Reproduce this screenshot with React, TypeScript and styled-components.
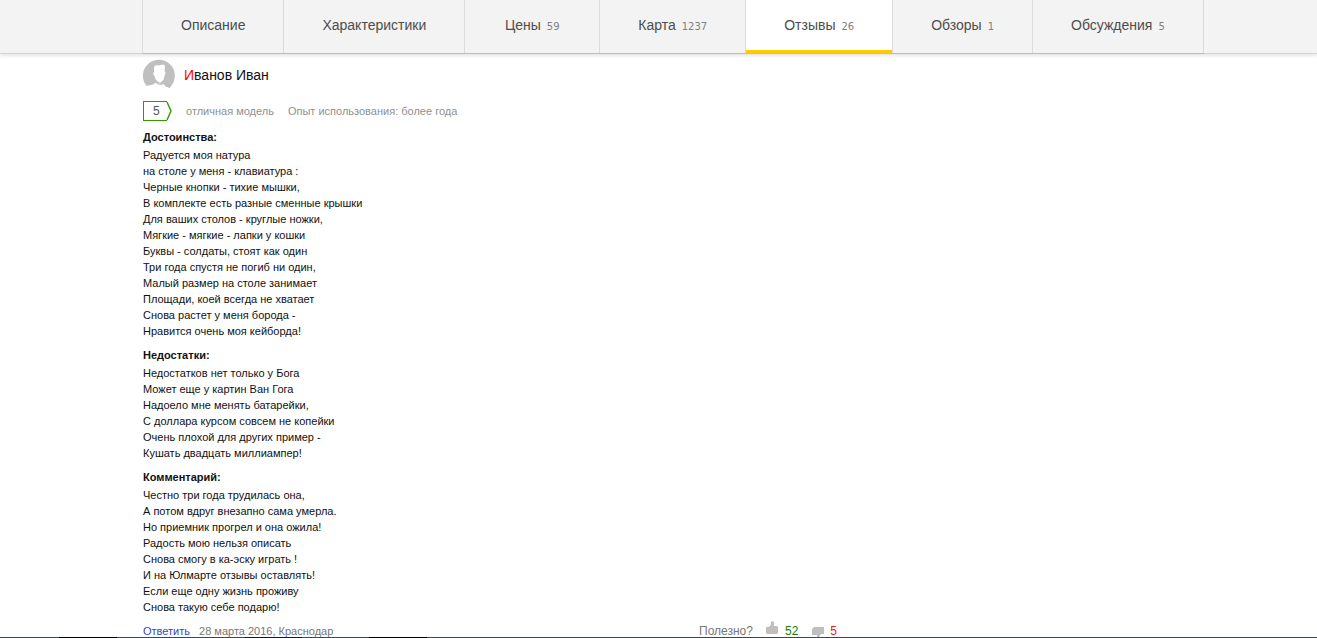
import React from 'react';
import styled, { createGlobalStyle } from 'styled-components';

const GlobalStyle = createGlobalStyle`
  * { box-sizing: border-box; }
  body {
    margin: 0;
    background: #fff;
    color: #111;
    font: 11px/16px "Liberation Sans", Arial, sans-serif;
  }
  #root { height: 100vh; overflow: hidden; }
`;

const TabBar = styled.nav`
  display: flex;
  padding-left: 142px;
  height: 54px;
  background: #f3f3f3;
  border-bottom: 1px solid #d4d4d4;
  box-shadow: 0 1px 4px rgba(0, 0, 0, 0.15);
`;

const TabList = styled.div`
  display: flex;
  height: 54px;
  border-left: 1px solid #dcdcdc;
  border-bottom: 1px solid #bcbcbc;
`;

const Tab = styled.a<{ $active?: boolean }>`
  display: flex;
  align-items: baseline;
  justify-content: center;
  gap: 6px;
  min-width: 135px;
  padding: 15px 38px 0;
  border-right: 1px solid #dcdcdc;
  background: ${(p) => (p.$active ? '#fff' : 'transparent')};
  box-shadow: ${(p) => (p.$active ? 'inset 0 -3px #fc0' : 'none')};
  color: #4d4d4d;
  font-size: 14px;
  line-height: 20px;
  text-decoration: none;
  white-space: nowrap;
`;

const Count = styled.span`
  color: #808080;
  font-family: "DejaVu Sans", Verdana, sans-serif;
  font-size: 10px;
`;

const Review = styled.article`
  max-width: 837px;
  padding: 5px 0 0 143px;
`;

const Author = styled.header`
  display: flex;
  align-items: center;
  gap: 9px;
  height: 32px;
  font-size: 14px;
`;

const AuthorName = styled.div`
  &::first-letter { color: #f00; }
`;

const Rating = styled.div`
  display: flex;
  align-items: center;
  gap: 14px;
  margin-top: 10px;
  height: 20px;
  color: #909090;
`;

const Score = styled.span`
  position: relative;
  width: 29px;
  height: 20px;
  padding-left: 10px;
  font-size: 12px;
  line-height: 20px;
  color: #555;

  svg { position: absolute; inset: 0; }
`;

const Section = styled.section`
  margin-top: 8px;
`;

const SectionTitle = styled.h3`
  margin: 0 0 2px;
  font-size: 11px;
  line-height: 16px;
`;

const Text = styled.p`
  margin: 0;
  white-space: pre-line;
`;

const Footer = styled.footer`
  display: flex;
  justify-content: space-between;
  margin-top: 8px;
  color: #777;
`;

const FooterGroup = styled.div`
  display: flex;
  gap: 9px;
`;

const Votes = styled(FooterGroup)`
  font-size: 12px;
`;

const ReplyLink = styled.a`
  color: #3344cc;
  text-decoration: none;
`;

const Vote = styled.button<{ $color: string }>`
  display: flex;
  align-items: center;
  gap: 6px;
  padding: 0;
  margin-left: 4px;
  border: 0;
  background: none;
  color: ${(p) => p.$color};
  font: inherit;

  svg { margin: -2px 0; }
`;

const BottomEdge = styled.div`
  position: fixed;
  inset: auto 0 0;
  height: 1px;
  background: linear-gradient(
    to right,
    #3f4650 59px, #000 59px 117px, #3f4650 117px 245px,
    #15181c 245px 302px, #3f4650 302px 369px, #000 369px 427px, #3f4650 427px
  );
`;

const tabs = [
  { title: 'Описание' },
  { title: 'Характеристики' },
  { title: 'Цены', count: 59 },
  { title: 'Карта', count: 1237 },
  { title: 'Отзывы', count: 26, active: true },
  { title: 'Обзоры', count: 1 },
  { title: 'Обсуждения', count: 5 },
];

const sections = [
  {
    title: 'Достоинства:',
    text: `Радуется моя натура
на столе у меня - клавиатура :
Черные кнопки - тихие мышки,
В комплекте есть разные сменные крышки
Для ваших столов - круглые ножки,
Мягкие - мягкие - лапки у кошки
Буквы - солдаты, стоят как один
Три года спустя не погиб ни один,
Малый размер на столе занимает
Площади, коей всегда не хватает
Снова растет у меня борода -
Нравится очень моя кейборда!`,
  },
  {
    title: 'Недостатки:',
    text: `Недостатков нет только у Бога
Может еще у картин Ван Гога
Надоело мне менять батарейки,
С доллара курсом совсем не копейки
Очень плохой для других пример -
Кушать двадцать миллиампер!`,
  },
  {
    title: 'Комментарий:',
    text: `Честно три года трудилась она,
А потом вдруг внезапно сама умерла.
Но приемник прогрел и она ожила!
Радость мою нельзя описать
Снова смогу в ка-эску играть !
И на Юлмарте отзывы оставлять!
Если еще одну жизнь проживу
Снова такую себе подарю!`,
  },
];

const Avatar = () => (
  <svg width="32" height="32" viewBox="0 0 32 32" aria-hidden="true">
    <path fill="#bfbfbf" d="M3.5 27A16 16 0 1 1 29 26L26.5 29L23 27.5L20 24.5L14 24.5L12 24C10 26.5 6 26 3.5 27Z" />
    <path
      fill="#fff"
      d="M11 8L13 6L15 6.5L21 5.5L22 8L21.5 12L22.5 14L21.5 17L20.5 21L17.5 23.5L15 23L12.5 20L11.5 17L10 15L11 13Z"
    />
    <path fill="#bfbfbf" d="M13 23C16 25.5 18 25 20.5 22.5L24 25.5L28 26.5L26.5 28.5L24 28L20.5 25L18 26L15 25.5Z" />
  </svg>
);

const ThumbUp = () => (
  <svg width="13" height="20" viewBox="0 0 13 20" aria-hidden="true">
    <path fill="#bfbfbf" d="M0 6H2L4 5L5 3V1L6 0L8 1V5H11L12 6V12L11 13H1L0 12Z" />
  </svg>
);

const ThumbDown = () => (
  <svg width="13" height="20" viewBox="0 0 13 20" aria-hidden="true">
    <path fill="#bfbfbf" d="M1 8L3 6H13V13H10L8 16H6V14H1Z" />
  </svg>
);

export default function App() {
  return (
    <>
      <GlobalStyle />
      <TabBar>
        <TabList>
          {tabs.map((tab) => (
            <Tab key={tab.title} href="#" $active={tab.active}>
              {tab.title}
              {tab.count && <Count>{tab.count}</Count>}
            </Tab>
          ))}
        </TabList>
      </TabBar>
      <Review>
        <Author>
          <Avatar />
          <AuthorName>Иванов Иван</AuthorName>
        </Author>
        <Rating>
          <Score>
            <svg width="29" height="20" viewBox="0 0 29 20" fill="none" stroke="#390" aria-hidden="true">
              <path shapeRendering="crispEdges" d="M24 0.5H0.5V19.5H24" />
              <path strokeWidth="1.4" d="M24 1L28 10L24 19" />
            </svg>
            5
          </Score>
          <span>отличная модель</span>
          <span>Опыт использования: более года</span>
        </Rating>
        {sections.map((section) => (
          <Section key={section.title}>
            <SectionTitle>{section.title}</SectionTitle>
            <Text>{section.text}</Text>
          </Section>
        ))}
        <Footer>
          <FooterGroup>
            <ReplyLink href="#">Ответить</ReplyLink>
            <span>28 марта 2016, Краснодар</span>
          </FooterGroup>
          <Votes>
            <span>Полезно?</span>
            <Vote type="button" $color="#1a8000"><ThumbUp />52</Vote>
            <Vote type="button" $color="#f02020"><ThumbDown />5</Vote>
          </Votes>
        </Footer>
      </Review>
      <BottomEdge />
    </>
  );
}
